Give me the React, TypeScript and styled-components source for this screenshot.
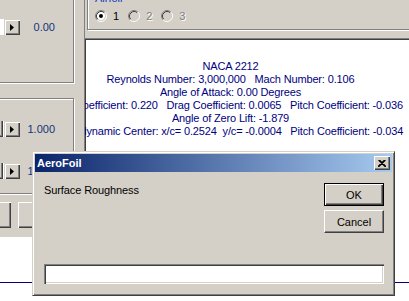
import React from 'react';
import styled, { createGlobalStyle } from 'styled-components';

const GlobalStyle = createGlobalStyle`
  html, body {
    margin: 0;
    padding: 0;
    background: #ffffff;
  }
  body {
    font-family: 'Liberation Sans', Arial, sans-serif;
    font-size: 11px;
  }
`;

const Screen = styled.div`
	position: relative;
	width: 409px;
	height: 301px;
	overflow: hidden;
	display: grid;
	grid-template-columns: 84px 1fr;
	grid-template-rows: 38px 199px 1fr;
	background: #ffffff;
`;

/* ---------- left control panel ---------- */

const LeftPanel = styled.div`
	grid-column: 1;
	grid-row: 1 / 3;
	background: #d4d0c8;
	display: flex;
	flex-direction: column;
	align-items: flex-start;
`;

interface EtchedBoxProps {
	$top: number;
	$height: number;
	$pad: number;
}
const SliderGroup = styled.div<EtchedBoxProps>`
	box-sizing: border-box;
	margin-top: ${({ $top }) => $top}px;
	margin-left: -6px;
	width: 80px;
	height: ${({ $height }) => $height}px;
	padding-top: ${({ $pad }) => $pad}px;
	border: 1px solid #808080;
	box-shadow: inset 1px 1px 0 #ffffff, 1px 1px 0 #ffffff;
	display: flex;
	flex-direction: column;
	gap: 26px;
`;

const SliderRow = styled.div`
	display: flex;
	align-items: center;
	height: 16px;
`;

const Track = styled.div`
	width: 9px;
	height: 16px;
	background: #ffffff;
	display: flex;
	justify-content: flex-end;
`;

const Thumb = styled.div`
	width: 6px;
	height: 16px;
	margin-right: 1px;
	box-sizing: border-box;
	background: #d4d0c8;
	box-shadow: inset -1px -1px 0 #404040, inset -2px -2px 0 #808080;
`;

const ArrowButton = styled.div`
	width: 16px;
	height: 16px;
	box-sizing: border-box;
	background: #d4d0c8;
	box-shadow: inset 1px 1px 0 #d4d0c8, inset 2px 2px 0 #ffffff,
		inset -1px -1px 0 #404040, inset -2px -2px 0 #808080;
	display: flex;
	align-items: center;
	justify-content: center;
`;

const Value = styled.span`
	width: 35px;
	text-align: right;
	color: #15337a;
	line-height: 13px;
`;

const PushRow = styled.div`
	display: flex;
	gap: 7px;
	margin-top: 8px;
	margin-left: -30px;
`;

const PushButton = styled.div<{ $w: number }>`
	width: ${({ $w }) => $w}px;
	height: 26px;
	box-sizing: border-box;
	background: #d4d0c8;
	box-shadow: inset 1px 1px 0 #ffffff, inset -1px -1px 0 #404040, inset -2px -2px 0 #808080;
`;

/* ---------- top band with airfoil choice ---------- */

const TopBand = styled.div`
	grid-column: 2;
	grid-row: 1;
	background: #d4d0c8;
	border-left: 1px solid #808080;
	padding-left: 2px;
	overflow: hidden;
`;

const AirfoilGroup = styled.div`
	position: relative;
	box-sizing: border-box;
	margin-top: -3px;
	width: 340px;
	height: 33px;
	border: 1px solid #808080;
	box-shadow: inset 1px 1px 0 #ffffff, 1px 1px 0 #ffffff;
	padding: 12px 0 0 7px;
	display: flex;
	gap: 9px;
`;

const Legend = styled.span`
	position: absolute;
	left: 5px;
	top: -6px;
	padding: 0 2px;
	background: #d4d0c8;
	color: #1038c0;
	line-height: 13px;
`;

const RadioItem = styled.label<{ $disabled?: boolean }>`
	display: flex;
	align-items: center;
	gap: 6px;
	height: 12px;
	line-height: 13px;
	color: ${({ $disabled }) => ($disabled ? '#808080' : '#000000')};
	text-shadow: ${({ $disabled }) => ($disabled ? '1px 1px 0 #ffffff' : 'none')};
`;

/* ---------- output area ---------- */

const Output = styled.div`
	grid-column: 2;
	grid-row: 2;
	background: #ffffff;
	border-top: 1px solid #808080;
	border-left: 1px solid #808080;
	box-shadow: inset 1px 1px 0 #404040;
	overflow: hidden;
	padding-top: 21px;
`;

const Results = styled.div`
	margin-left: -33px;
	width: 357px;
	text-align: center;
	white-space: pre;
	color: #000080;
	line-height: 13px;
	letter-spacing: -0.15px;
`;

const PlotStrip = styled.div`
	grid-column: 1 / 3;
	grid-row: 3;
	background: #ffffff;
	padding-top: 45px;
`;

const Axis = styled.div`
	height: 1px;
	background: #000080;
`;

/* ---------- dialog ---------- */

const Dialog = styled.div`
	position: absolute;
	left: 32px;
	top: 151px;
	width: 363px;
	height: 145px;
	box-sizing: border-box;
	background: #d4d0c8;
	border: 1px solid;
	border-color: #d4d0c8 #404040 #404040 #d4d0c8;
	box-shadow: inset 1px 1px 0 #ffffff, inset -1px -1px 0 #808080;
	padding: 2px;
	display: flex;
	flex-direction: column;
`;

const TitleBar = styled.div`
	height: 18px;
	flex: none;
	display: flex;
	align-items: center;
	padding: 0 2px 0 2px;
	background: linear-gradient(to right, #0a246a, #a6caf0);
	color: #ffffff;
	font-weight: bold;
	font-size: 11px;
`;

const CloseButton = styled.div`
	margin-left: auto;
	width: 16px;
	height: 14px;
	box-sizing: border-box;
	background: #d4d0c8;
	box-shadow: inset 1px 1px 0 #ffffff, inset -1px -1px 0 #404040, inset -2px -2px 0 #808080;
	display: flex;
	align-items: center;
	justify-content: center;
`;

const DialogBody = styled.div`
	flex: 1;
	display: flex;
	flex-direction: column;
	padding: 11px 8px 9px 9px;
`;

const TopRow = styled.div`
	display: flex;
	justify-content: space-between;
`;

const Prompt = styled.div`
	color: #000000;
	line-height: 13px;
	margin-top: 1px;
	letter-spacing: -0.1px;
`;

const ButtonColumn = styled.div`
	display: flex;
	flex-direction: column;
	gap: 4px;
`;

const DialogButton = styled.div<{ $default?: boolean }>`
	width: 60px;
	height: 23px;
	box-sizing: border-box;
	background: #d4d0c8;
	border: 1px solid ${({ $default }) => ($default ? '#000000' : '#ffffff')};
	border-right-color: ${({ $default }) => ($default ? '#000000' : '#404040')};
	border-bottom-color: ${({ $default }) => ($default ? '#000000' : '#404040')};
	box-shadow: ${({ $default }) =>
		$default
			? 'inset 1px 1px 0 #ffffff, inset -1px -1px 0 #404040, inset -2px -2px 0 #808080'
			: 'inset -1px -1px 0 #808080'};
	display: flex;
	align-items: center;
	justify-content: center;
	color: #000000;
	font-size: 11px;
`;

const TextField = styled.input`
	margin-top: auto;
	width: 100%;
	height: 20px;
	box-sizing: border-box;
	border: none;
	outline: none;
	background: #ffffff;
	box-shadow: inset 1px 1px 0 #808080, inset 2px 2px 0 #404040,
		inset -1px -1px 0 #ffffff, inset -2px -2px 0 #d4d0c8;
	font-family: 'Liberation Sans', Arial, sans-serif;
	font-size: 11px;
	padding: 2px 4px;
`;

/* ---------- icons ---------- */

const RightArrow: React.FC = () => (
	<svg width="4" height="7" viewBox="0 0 4 7">
		<path d="M0 0 L4 3.5 L0 7 Z" fill="#000000" />
	</svg>
);

const CloseGlyph: React.FC = () => (
	<svg width="8" height="7" viewBox="0 0 8 7">
		<path d="M0.5 0 L7.5 7 M1.5 0 L8 6.5 M7.5 0 L0.5 7 M6.5 0 L0 6.5" stroke="#000000" strokeWidth="1.1" />
	</svg>
);

const Radio: React.FC<{ checked?: boolean; disabled?: boolean }> = ({ checked, disabled }) => (
	<svg width="12" height="12" viewBox="0 0 12 12">
		<circle cx="6" cy="6" r="4.2" fill={disabled ? '#d4d0c8' : '#ffffff'} />
		<path d="M2.11 9.89 A5.5 5.5 0 0 1 9.89 2.11" stroke="#808080" fill="none" />
		<path d="M9.89 2.11 A5.5 5.5 0 0 1 2.11 9.89" stroke="#ffffff" fill="none" />
		<path d="M2.82 9.18 A4.5 4.5 0 0 1 9.18 2.82" stroke="#404040" fill="none" />
		<path d="M9.18 2.82 A4.5 4.5 0 0 1 2.82 9.18" stroke="#d4d0c8" fill="none" />
		{checked && <circle cx="6" cy="6" r="2" fill="#000000" />}
	</svg>
);

const results = [
	'NACA 2212',
	'Reynolds Number: 3,000,000   Mach Number: 0.106',
	'Angle of Attack: 0.00 Degrees',
	'Lift Coefficient: 0.220   Drag Coefficient: 0.0065   Pitch Coefficient: -0.036',
	'Angle of Zero Lift: -1.879',
	'Aerodynamic Center: x/c= 0.2524  y/c= -0.0004   Pitch Coefficient: -0.034',
];

const App: React.FC = () => {
	return (
		<>
			<GlobalStyle />
			<Screen>
				<LeftPanel>
					<SliderGroup $top={-8} $height={91} $pad={26}>
						<SliderRow>
							<Track />
							<ArrowButton><RightArrow /></ArrowButton>
							<Value>0.00</Value>
						</SliderRow>
					</SliderGroup>
					<SliderGroup $top={15} $height={96} $pad={22}>
						<SliderRow>
							<Track><Thumb /></Track>
							<ArrowButton><RightArrow /></ArrowButton>
							<Value>1.000</Value>
						</SliderRow>
						<SliderRow>
							<Track><Thumb /></Track>
							<ArrowButton><RightArrow /></ArrowButton>
							<Value>1.000</Value>
						</SliderRow>
					</SliderGroup>
					<PushRow>
						<PushButton $w={41} />
						<PushButton $w={60} />
					</PushRow>
				</LeftPanel>

				<TopBand>
					<AirfoilGroup>
						<Legend>Airfoil</Legend>
						<RadioItem><Radio checked />1</RadioItem>
						<RadioItem $disabled><Radio disabled />2</RadioItem>
						<RadioItem $disabled><Radio disabled />3</RadioItem>
					</AirfoilGroup>
				</TopBand>

				<Output>
					<Results>
						{results.map((line) => (
							<div key={line}>{line}</div>
						))}
					</Results>
				</Output>

				<PlotStrip>
					<Axis />
				</PlotStrip>

				<Dialog>
					<TitleBar>
						AeroFoil
						<CloseButton><CloseGlyph /></CloseButton>
					</TitleBar>
					<DialogBody>
						<TopRow>
							<Prompt>Surface Roughness</Prompt>
							<ButtonColumn>
								<DialogButton $default>OK</DialogButton>
								<DialogButton>Cancel</DialogButton>
							</ButtonColumn>
						</TopRow>
						<TextField defaultValue="" />
					</DialogBody>
				</Dialog>
			</Screen>
		</>
	);
};

export default App;
